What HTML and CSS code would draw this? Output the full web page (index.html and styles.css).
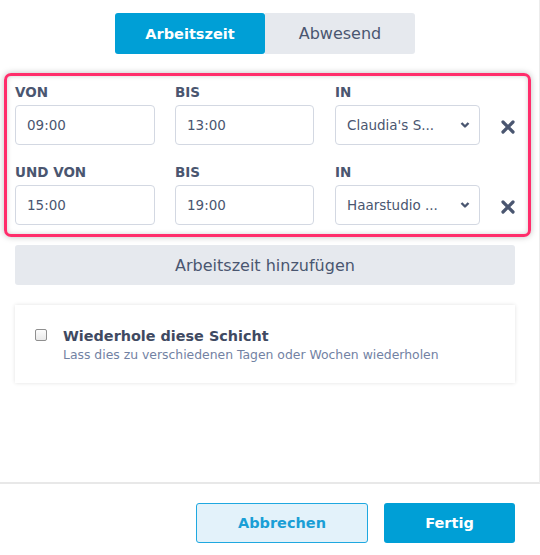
FILE: index.html
```html
<!DOCTYPE html>
<html lang="de">
<head>
<meta charset="utf-8">
<title>Schicht</title>
<link rel="stylesheet" href="styles.css">
</head>
<body>
<div class="panel">
  <div class="tabs">
    <button class="tab tab-active">Arbeitszeit</button>
    <button class="tab">Abwesend</button>
  </div>

  <div class="shifts">
    <div class="shift-row">
      <div class="field">
        <div class="label">VON</div>
        <div class="input">09:00</div>
      </div>
      <div class="field">
        <div class="label">BIS</div>
        <div class="input">13:00</div>
      </div>
      <div class="field">
        <div class="label">IN</div>
        <div class="input select"><span>Claudia's S...</span>
          <svg class="chev" viewBox="0 0 10 8" width="10" height="8"><path d="M1.5 2 L5 5.5 L8.5 2" fill="none" stroke="#4a5670" stroke-width="2.4" stroke-linejoin="round"/></svg>
        </div>
      </div>
      <div class="remove">
        <svg viewBox="0 0 14 14" width="14" height="14"><path d="M2 2 L12 12 M12 2 L2 12" stroke="#4a5670" stroke-width="3.2" stroke-linecap="round"/></svg>
      </div>
    </div>
    <div class="shift-row">
      <div class="field">
        <div class="label">UND VON</div>
        <div class="input">15:00</div>
      </div>
      <div class="field">
        <div class="label">BIS</div>
        <div class="input">19:00</div>
      </div>
      <div class="field">
        <div class="label">IN</div>
        <div class="input select"><span>Haarstudio ...</span>
          <svg class="chev" viewBox="0 0 10 8" width="10" height="8"><path d="M1.5 2 L5 5.5 L8.5 2" fill="none" stroke="#4a5670" stroke-width="2.4" stroke-linejoin="round"/></svg>
        </div>
      </div>
      <div class="remove">
        <svg viewBox="0 0 14 14" width="14" height="14"><path d="M2 2 L12 12 M12 2 L2 12" stroke="#4a5670" stroke-width="3.2" stroke-linecap="round"/></svg>
      </div>
    </div>
  </div>

  <button class="add-btn">Arbeitszeit hinzufügen</button>

  <div class="repeat-card">
    <span class="checkbox"></span>
    <div class="repeat-text">
      <div class="repeat-title">Wiederhole diese Schicht</div>
      <div class="repeat-sub">Lass dies zu verschiedenen Tagen oder Wochen wiederholen</div>
    </div>
  </div>
</div>

<div class="footer">
  <button class="btn btn-outline">Abbrechen</button>
  <button class="btn btn-primary">Fertig</button>
</div>
</body>
</html>
```
FILE: styles.css
```css
* { box-sizing: border-box; }
html, body { margin: 0; background: #fff; }
body {
  width: 540px;
  font-family: "DejaVu Sans", "Liberation Sans", sans-serif;
  color: #4a5670;
}
button { font-family: inherit; cursor: pointer; }

.panel {
  height: 484px;
  border-right: 1px solid #ececec;
  border-bottom: 2px solid #e8e8e8;
  padding: 13px 24px 0 15px;
}

.tabs {
  display: flex;
  justify-content: center;
}
.tab {
  width: 150px;
  height: 41px;
  border: 0;
  background: #e6e9ee;
  color: #4a5670;
  font-size: 16px;
  border-radius: 0 3px 3px 0;
}
.tab-active {
  background: #009fd6;
  color: #fff;
  font-size: 14.5px;
  font-weight: bold;
  border-radius: 3px;
}

.shifts {
  margin: 19px -16px 0 -11px;
  border: 3px solid #ff2d6b;
  border-radius: 7px;
  padding: 8px 0 9px 8px;
  box-shadow: 0 0 6px rgba(0,0,0,0.25), inset 0 0 5px rgba(0,0,0,0.18);
  display: flex;
  flex-direction: column;
  gap: 19px;
}
.shift-row {
  display: grid;
  grid-template-columns: 140px 140px 145px 16px;
  column-gap: 20px;
  align-items: end;
}
.shift-row .field:nth-child(2) { margin-right: 1px; }
.label {
  font-size: 13.5px;
  font-weight: bold;
  line-height: 16px;
  margin-bottom: 5px;
  color: #4a5670;
}
.input {
  height: 40px;
  border: 1px solid #d3d8e2;
  border-radius: 4px;
  display: flex;
  align-items: center;
  padding: 0 11px;
  font-size: 13.5px;
  color: #4a5670;
  background: #fff;
}
.select {
  justify-content: space-between;
  padding-right: 9px;
}
.remove {
  height: 40px;
  display: flex;
  align-items: center;
  justify-content: center;
  padding-top: 4px;
}

.add-btn {
  display: block;
  width: 100%;
  height: 40px;
  margin-top: 8px;
  border: 0;
  border-radius: 3px;
  background: #e6e9ee;
  color: #4a5670;
  font-size: 16px;
}

.repeat-card {
  margin-top: 20px;
  height: 78px;
  background: #fff;
  box-shadow: 0 0 4px rgba(0,0,0,0.12);
  display: flex;
  align-items: flex-start;
  padding: 23px 0 0 20px;
}
.checkbox {
  width: 12px;
  height: 12px;
  margin-top: 1px;
  border: 1px solid #8f8f8f;
  border-radius: 2px;
  background: linear-gradient(#fcfcfc, #e9e9e9);
  margin-right: 16px;
}
.repeat-title {
  font-size: 14.4px;
  font-weight: bold;
  line-height: 16px;
  color: #3f4a62;
}
.repeat-sub {
  margin-top: 4px;
  font-size: 12.4px;
  line-height: 14px;
  color: #7282a3;
}

.footer {
  display: flex;
  justify-content: flex-end;
  gap: 16px;
  padding: 19px 25px 0 0;
}
.btn {
  height: 40px;
  border-radius: 3px;
  font-size: 14.5px;
  font-weight: bold;
}
.btn-outline {
  width: 172px;
  background: #e3f2fa;
  border: 1px solid #1fa8e0;
  color: #1a9fd6;
}
.btn-primary {
  width: 131px;
  background: #009fd6;
  border: 0;
  color: #fff;
}
```
